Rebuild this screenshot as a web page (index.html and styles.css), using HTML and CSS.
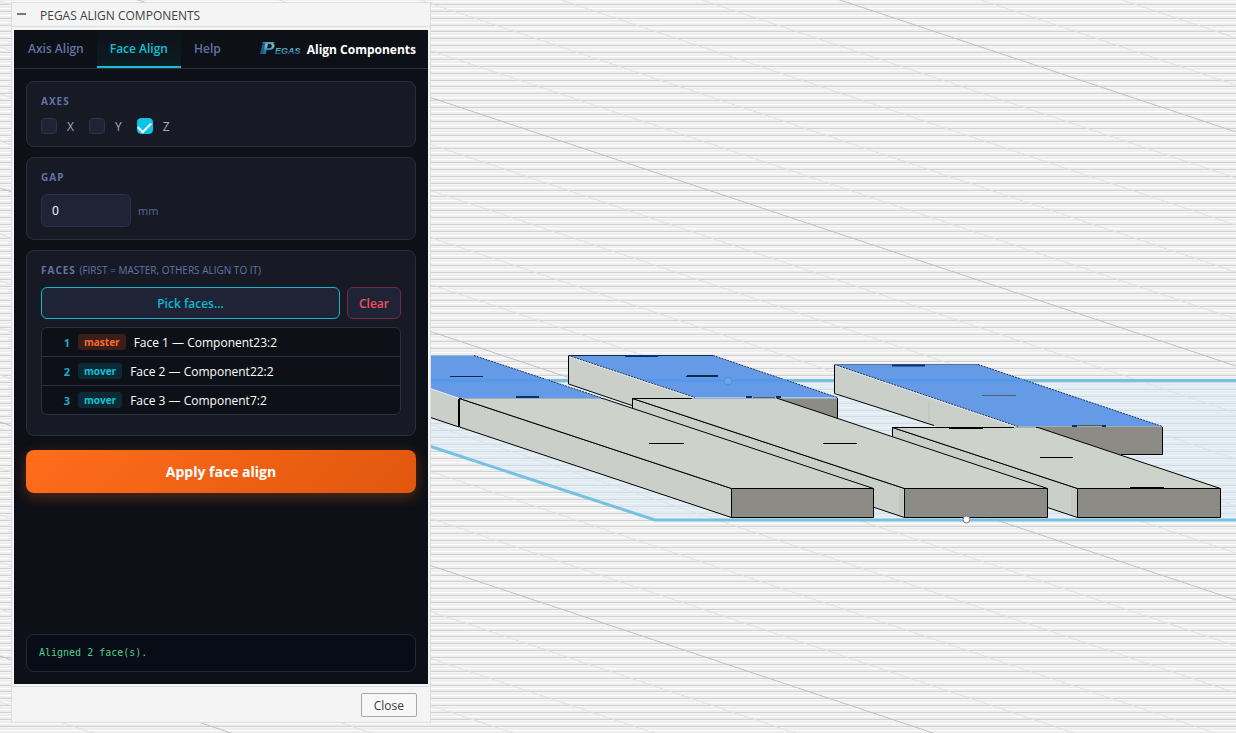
FILE: index.html
```html
<!DOCTYPE html>
<html lang="en">
<head>
<meta charset="utf-8">
<title>Pegas Align Components</title>
<link rel="stylesheet" href="styles.css">
</head>
<body>
<main class="workspace">
  <svg class="viewport" viewBox="0 0 1236 733" preserveAspectRatio="xMinYMin slice" aria-hidden="true">
    <defs>
      <pattern id="rules" width="1236" height="55" patternUnits="userSpaceOnUse">
        <rect width="1236" height="55" fill="#eeeeee"/>
        <path stroke="#ffffff" d="M0 1.5h1236M0 8.5h1236M0 15.5h1236M0 22.5h1236M0 28.5h1236M0 35.5h1236M0 42.5h1236M0 49.5h1236"/>
        <path stroke="#f6f6f6" d="M0 5.5h1236M0 12.5h1236M0 19.5h1236M0 26.5h1236M0 32.5h1236M0 39.5h1236M0 46.5h1236M0 53.5h1236"/>
        <path stroke="#d0d0d0" d="M0 4.5h1236M0 11.5h1236M0 18.5h1236M0 25.5h1236M0 31.5h1236M0 38.5h1236M0 45.5h1236M0 52.5h1236"/>
      </pattern>
    </defs>
    <rect width="1236" height="733" fill="url(#rules)"/>
    <path class="minor" d="M0-374l1236 412M0-327l1236 412M0-234l1236 412M0-187l1236 412M0-140l1236 412M0-93l1236 412M0 1l1236 412M0 47l1236 412M0 94l1236 412M0 141l1236 412M0 234l1236 412M0 281l1236 412M0 328l1236 412M0 375l1236 412M0 468l1236 412M0 515l1236 412M0 562l1236 412M0 609l1236 412M0 702l1236 412"/>
    <path class="major" d="M0-280l1236 412M0-46l1236 412M0 188l1236 412M0 422l1236 412M0 656l1236 412"/>

    <path class="plane" d="M430 381H1236V520H655L430 446z"/>
    <path class="plane-edge" d="M430 380.500H1236M420 443L655 520H1236"/>

    <path class="side" d="M420 385L458 398V427L420 414z"/>
    <path class="picked" d="M420 355.500H474L602 398H458L420 385z"/>
    <path class="edge-light" d="M420 385L458 398"/>
    <path class="dots" d="M474 355.500L602 398"/>

    <path class="side" d="M568.500 355.500L695 398V427L568.500 384z"/>
    <path class="front" d="M695 398H837.500V427H695z"/>
    <path class="picked" d="M568.500 355.500H713L837.500 397.500H695z"/>
    <path class="edge-light" d="M568.500 356.500L695 398.500"/>
    <path class="edge-gray" d="M695 398.500H837"/>
    <path class="dots" d="M568.500 355.500L695 397.500M713 355.500L837.500 397.500"/>
    <path class="edge-navy" d="M568.500 355.500H713"/>

    <path class="side" d="M834.500 364.500L1018 427V454L834.500 393z"/>
    <path class="front" d="M1018 427H1162.500V454.500H1018z"/>
    <path class="picked" d="M834.500 364.500H978L1162.500 426.500H1018z"/>
    <path class="edge-light" d="M834.500 365.500L1018 427.500"/>
    <path class="edge-gray" d="M1018 426.500H1162"/>
    <path class="dots" d="M834.500 364.500L1018 426.500M978 364.500L1162.500 426.500"/>
    <path stroke="#56759e" d="M834.500 364.500H978"/>
    <path class="plane-through" d="M430 380.500H549M647 380.500H786M885 380.500H1024"/>

    <g class="box">
      <path class="side" d="M892.500 427.500L1077.500 488.500V517.500L892.500 456z"/>
      <path class="top" d="M892.500 427.500H1038L1220.500 488.500H1077.500z"/>
      <path class="front" d="M1077.500 488.500H1220.500V517.500H1077.500z"/>
      <path class="side" d="M632.500 398.500L904.500 488.500V517.500L632.500 427z"/>
      <path class="top" d="M632.500 398.500H778L1047.500 488.500H904.500z"/>
      <path class="front" d="M904.500 488.500H1047.500V517.500H904.500z"/>
      <path class="side" d="M459.500 398.500L731.500 488.500V517.500L459.500 427z"/>
      <path class="top" d="M459.500 398.500H603L873.500 488.500H731.500z"/>
      <path class="front" d="M731.500 488.500H873.500V517.500H731.500z"/>
    </g>
    <path class="edge-gray" d="M462 398.500H601M692 398.500H777M1014 427.500H1036"/>
    <path class="edge-soft" d="M900 489V515M902 489V515M1072 489V515M1075 489V515M929 401V422"/>
    <path class="edge" d="M568.500 356V384L632 405.500M834.500 365V393.500L934 425.500M420 414L459 427M837.500 398V418M1162.500 427V454.500H1121"/>
    <path class="edge bold" d="M459 399V427M949 428H983M1130 488H1164"/>
    <path class="edge" d="M649 443.500H684M823 443.500H857M1040 457.500H1073"/>
    <path class="navy-marks" d="M516 397H539M625 356H658M892 365.500H925M746 397H752M776 397H781M1072 426H1077M1102 426H1106"/>
    <path class="edge-navy" d="M450 376.500H483M687 375.500H718M686 376.500H718"/>
    <path stroke="#555b60" d="M753 397.500H775M982 395.500H1016M1077 425.500H1102"/>

    <circle cx="728" cy="381" r="4" fill="#6aa4ec" stroke="#4f8fe0"/>
    <circle cx="966.500" cy="519.500" r="3.500" fill="#ffffff" stroke="#707477"/>
  </svg>

  <section class="dialog" aria-labelledby="dialog-title">
    <header class="dialog-head">
      <button class="collapse" type="button" aria-label="Collapse"></button>
      <h1 class="dialog-title" id="dialog-title">PEGAS ALIGN COMPONENTS</h1>
    </header>

    <div class="panel">
      <div class="topbar">
        <nav class="tabs">
          <button class="tab" type="button">Axis Align</button>
          <button class="tab tab-active" type="button">Face Align</button>
          <button class="tab" type="button">Help</button>
        </nav>
        <div class="brand">
          <svg class="logo" viewBox="0 0 42 18" role="img" aria-label="Pegas">
            <defs>
              <linearGradient id="steel" x1="0" y1="0" x2="0" y2="1">
                <stop offset="0" stop-color="#2b6187"/>
                <stop offset=".35" stop-color="#70cbd6"/>
                <stop offset=".6" stop-color="#2f79a8"/>
                <stop offset="1" stop-color="#285483"/>
              </linearGradient>
            </defs>
            <path d="M3 2H9L5 14H0z" fill="#23598b"/>
            <path d="M2 2H15L12 4H6z" fill="#3b8baa"/>
            <text class="logo-big" x="3" y="14" fill="url(#steel)">P</text>
            <text class="logo-small" x="15" y="14" fill="url(#steel)">EGAS</text>
          </svg>
          <span class="brand-name">Align Components</span>
        </div>
      </div>

      <form class="content">
        <fieldset class="card">
          <legend class="card-label">AXES</legend>
          <div class="axes">
            <label class="axis"><input class="check" type="checkbox">X</label>
            <label class="axis"><input class="check" type="checkbox">Y</label>
            <label class="axis"><input class="check" type="checkbox" checked>Z</label>
          </div>
        </fieldset>

        <div class="card">
          <label class="card-label" for="gap">GAP</label>
          <div class="gap-row">
            <input class="gap-input" id="gap" type="text" value="0">
            <span class="unit">mm</span>
          </div>
        </div>

        <section class="card card-faces">
          <h2 class="card-label">FACES <span class="hint">(FIRST = MASTER, OTHERS ALIGN TO IT)</span></h2>
          <div class="actions">
            <button class="pick" type="button">Pick faces...</button>
            <button class="clear" type="button">Clear</button>
          </div>
          <ol class="faces">
            <li class="face"><span class="num">1</span><span class="badge badge-master">master</span><span>Face 1 — Component23:2</span></li>
            <li class="face"><span class="num">2</span><span class="badge">mover</span><span>Face 2 — Component22:2</span></li>
            <li class="face"><span class="num">3</span><span class="badge">mover</span><span>Face 3 — Component7:2</span></li>
          </ol>
        </section>

        <button class="apply" type="button">Apply face align</button>
        <output class="status">Aligned 2 face(s).</output>
      </form>
    </div>

    <footer class="dialog-foot">
      <button class="close" type="button">Close</button>
    </footer>
  </section>
</main>
</body>
</html>
```
FILE: styles.css
```css
* {
  box-sizing: border-box;
}

body {
  margin: 0;
  font-family: "Open Sans", "Noto Sans", sans-serif;
  font-size: 12px;
}

button,
input {
  font: inherit;
}

.workspace {
  position: relative;
  min-height: 100vh;
  display: flex;
  padding: 2px 0 10px 11px;
  overflow: hidden;
  background: #eeeeee;
}

/* 3D viewport */
.viewport {
  position: absolute;
  inset: 0;
  width: 100%;
  height: 100%;
  fill: none;
}

.minor { stroke: #e0e0e0; }
.major { stroke: #c0c0c0; }
.plane { fill: #d5e8f5; fill-opacity: .5; }
.plane-edge { stroke: #76c1e2; stroke-width: 3; }
.plane-through { stroke: #5597e9; stroke-width: 3; }
.picked { fill: #659be6; }
.side { fill: #cbcfc9; }
.top { fill: #cdd3cb; }
.front { fill: #8d8b86; }
.box path { stroke: #000000; }
.edge { stroke: #000000; }
.edge.bold { stroke-width: 2; }
.edge-light { stroke: #e6edf3; }
.edge-gray { stroke: #a3adb8; }
.edge-soft { stroke: #b9c0b8; }
.edge-navy { stroke: #12294f; }
.navy-marks { stroke: #0b2f72; stroke-width: 2; }
.dots { stroke: #1d3558; stroke-dasharray: 2 1; }

/* Dialog */
.dialog {
  position: relative;
  width: 420px;
  display: flex;
  flex-direction: column;
  background: #f4f4f4;
  border: 1px solid #dcdcdc;
}

.dialog-head {
  display: flex;
  align-items: center;
  gap: 14px;
  height: 24px;
  padding: 0 5px;
  border-bottom: 1px solid #dddddd;
}

.collapse {
  width: 9px;
  height: 12px;
  padding: 0;
  border: 0;
  background: linear-gradient(#777777, #777777) center 4px / 9px 2px no-repeat;
}

.dialog-title {
  margin: 0;
  padding-top: 2px;
  font-size: 12px;
  font-weight: 400;
  color: #404040;
}

.panel {
  flex: 1;
  display: flex;
  flex-direction: column;
  margin: 3px 2px 2px;
  background: #0d1017;
}

.topbar {
  display: flex;
  justify-content: space-between;
  height: 39px;
  padding: 0 12px 0 1px;
  border-bottom: 1px solid #2a303d;
}

.tabs {
  display: flex;
}

.tab {
  padding: 0 13px;
  border: 0;
  border-bottom: 2px solid transparent;
  background: none;
  color: #6473a3;
  font-weight: 600;
}

.tab-active {
  border-bottom-color: #13bdd2;
  background: linear-gradient(#0d1219, #0c1d23);
  color: #12c0d6;
}

.brand {
  display: flex;
  align-items: center;
  gap: 5px;
}

.logo {
  width: 42px;
  height: 18px;
}

.logo-big,
.logo-small {
  font-family: "Liberation Sans", sans-serif;
  font-style: italic;
  font-weight: 700;
}

.logo-big { font-size: 17px; }
.logo-small { font-size: 9px; }

.brand-name {
  color: #ffffff;
  font-weight: 700;
}

.content {
  flex: 1;
  display: flex;
  flex-direction: column;
  gap: 10px;
  padding: 12px;
}

.card {
  min-width: 0;
  margin: 0;
  padding: 11px 14px 12px;
  border: 1px solid #282e3d;
  border-radius: 8px;
  background: #171a25;
}

.card-label {
  display: block;
  float: left;
  width: 100%;
  margin: 0;
  padding: 0;
  color: #6473a3;
  font-size: 10px;
  font-weight: 700;
  line-height: 16px;
  letter-spacing: 1px;
}

.hint {
  font-weight: 400;
  letter-spacing: 0;
}

.axes {
  clear: both;
  display: flex;
  gap: 15px;
  padding-top: 9px;
}

.axis {
  display: flex;
  align-items: center;
  gap: 10px;
  height: 16px;
  color: #a3abc4;
}

.check {
  appearance: none;
  width: 16px;
  height: 16px;
  margin: 0;
  border: 1px solid #2e3547;
  border-radius: 4px;
  background: #1e2436;
}

.check:checked {
  display: grid;
  place-items: center;
  border-color: #08c4e8;
  background: #08c4e8;
}

.check:checked::before {
  content: "";
  width: 11px;
  height: 6px;
  margin-bottom: 1px;
  border: solid #ffffff;
  border-width: 0 0 2px 2px;
  rotate: -45deg;
}

.gap-row {
  clear: both;
  display: flex;
  align-items: center;
  gap: 7px;
  padding-top: 9px;
}

.gap-input {
  width: 90px;
  height: 33px;
  padding: 0 10px;
  border: 1px solid #29324a;
  border-radius: 6px;
  background: #1e2436;
  color: #ffffff;
}

.unit {
  color: #5a6893;
  font-size: 11px;
}

.card-faces {
  padding-bottom: 20px;
}

.actions {
  clear: both;
  display: flex;
  gap: 7px;
  padding-top: 9px;
}

.pick,
.clear {
  height: 32px;
  border-radius: 6px;
  background: #1e2436;
  font-weight: 600;
}

.pick {
  flex: 1;
  border: 1px solid #18b4cb;
  color: #12b8d0;
}

.clear {
  padding: 0 11px;
  border: 1px solid #6f2c42;
  color: #f04f66;
}

.faces {
  margin: 8px 0 0;
  padding: 0;
  border: 1px solid #2a303d;
  border-radius: 6px;
  list-style: none;
  background: #0d1017;
  color: #ffffff;
}

.face {
  display: flex;
  align-items: center;
  gap: 8px;
  height: 28px;
  padding: 0 10px;
}

.face + .face {
  height: 29px;
  border-top: 1px solid #2a303d;
}

.num {
  width: 18px;
  color: #16aec4;
  font-size: 11px;
  font-weight: 700;
  text-align: right;
}

.badge {
  padding: 0 6px;
  border-radius: 3px;
  background: #0b2a35;
  color: #12c0d6;
  font-size: 10px;
  font-weight: 700;
  line-height: 16px;
}

.badge-master {
  background: #3b1e18;
  color: #f96a2b;
}

.apply {
  height: 43px;
  margin-top: 4px;
  border: 0;
  border-radius: 8px;
  background: linear-gradient(135deg, #ff6d1c, #e0570e);
  box-shadow: 0 4px 14px rgba(255, 107, 26, .3);
  color: #ffffff;
  font-size: 14px;
  font-weight: 700;
}

.status {
  display: block;
  height: 38px;
  margin-top: auto;
  padding: 0 12px;
  border: 1px solid #232936;
  border-radius: 8px;
  background: #080c16;
  color: #4fce8c;
  font: 10px/35px "DejaVu Sans Mono", monospace;
}

.dialog-foot {
  display: flex;
  justify-content: flex-end;
  padding: 6px 13px 5px;
  border-top: 1px solid #dddddd;
}

.close {
  height: 24px;
  padding: 0 12px;
  border: 1px solid #a8a8a8;
  border-radius: 2px;
  background: #f7f7f7;
  color: #3c3c3c;
}
```
